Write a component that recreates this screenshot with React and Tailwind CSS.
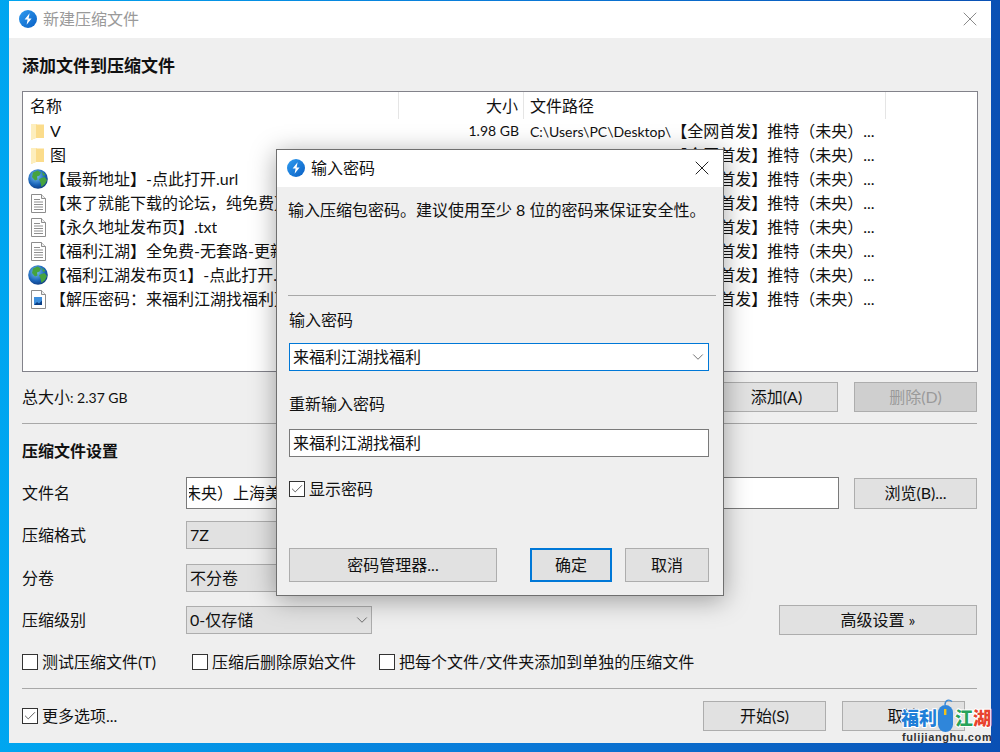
import { ChevronDown, Check, X } from "lucide-react";

const files = [
  { icon: "folder", name: "V", size: "1.98 GB" },
  { icon: "folder", name: "图", size: "" },
  { icon: "globe", name: "【最新地址】-点此打开.url", size: "" },
  { icon: "doc", name: "【来了就能下载的论坛，纯免费】.txt", size: "" },
  { icon: "doc", name: "【永久地址发布页】.txt", size: "" },
  { icon: "doc", name: "【福利江湖】全免费-无套路-更新快.txt", size: "" },
  { icon: "globe", name: "【福利江湖发布页1】-点此打开.url", size: "" },
  { icon: "image", name: "【解压密码：来福利江湖找福利】.png", size: "" },
];

function AppLogo() {
  return (
    <svg width="18" height="18" viewBox="0 0 18 18" className="shrink-0">
      <defs>
        <linearGradient id="logoFill" x1="0" y1="0" x2="1" y2="1">
          <stop offset="0" stopColor="#2f9cf0" />
          <stop offset="1" stopColor="#0a5fc4" />
        </linearGradient>
      </defs>
      <circle cx="9" cy="9" r="9" fill="url(#logoFill)" />
      <path d="M10.6 3.2 5.6 9.6h3l-1 5.2 5-6.4h-3z" fill="#fff" />
    </svg>
  );
}

function FileIcon({ type }) {
  if (type === "folder") {
    return (
      <svg width="13" height="17" viewBox="0 0 13 17" className="ml-[1px]">
        <path d="M0 1h5l1 .5h7V15H5l-5 2z" fill="#fbdc8b" />
        <path d="M0 1v16l5-2V1z" fill="#fdeebd" />
      </svg>
    );
  }
  if (type === "globe") {
    return (
      <svg width="20" height="20" viewBox="0 0 20 20" className="-ml-[2px]">
        <defs>
          <radialGradient id="globeFill" cx="0.4" cy="0.35" r="0.75">
            <stop offset="0" stopColor="#7cc4f4" />
            <stop offset="0.6" stopColor="#1a64b8" />
            <stop offset="1" stopColor="#0c2f70" />
          </radialGradient>
        </defs>
        <circle cx="10" cy="10" r="9.8" fill="url(#globeFill)" />
        <path d="M5 3.5 9.5 1.5l3.5 2-1.5 3-2.5 1 .5 3-2.5 1-3-3.5zM11 10l5.5-2 2.5 3-2 4-3.5 3-1-4.5zM14 2.5l3.5 3.5-2.5 1z" fill="#46a33e" />
      </svg>
    );
  }
  if (type === "image") {
    return (
      <svg width="15" height="19" viewBox="0 0 15 19" className="ml-[1px]">
        <path d="M.5.5h10l4 4v14H.5z" fill="#fff" stroke="#8d8d8d" />
        <path d="M10.5.5v4h4" fill="#eee" stroke="#8d8d8d" />
        <rect x="3" y="7" width="8" height="8" fill="#3f8fdc" />
        <path d="M3 15l3-3 2 1.5 3-3V15z" fill="#0c3f85" />
      </svg>
    );
  }
  return (
    <svg width="15" height="19" viewBox="0 0 15 19" className="ml-[1px]">
      <path d="M.5.5h10l4 4v14H.5z" fill="#fff" stroke="#8d8d8d" />
      <path d="M10.5.5v4h4" fill="#eee" stroke="#8d8d8d" />
      <path d="M3 5.5h6M3 8h9M3 10.5h9M3 13h9M3 15.5h9" stroke="#8f8f8f" />
    </svg>
  );
}

function Btn({ children, className = "", disabled = false, primary = false }) {
  const border = primary ? "border-2 border-[#0078d7]" : "border border-[#adadad]";
  const fill = disabled ? "text-[#9a9a9a] bg-[#cfcfcf]" : "bg-[#e1e1e1]";
  return (
    <div className={`flex items-center justify-center shrink-0 ${border} ${fill} ${className}`}>
      {children}
    </div>
  );
}

function CheckBox({ checked, children, className = "" }) {
  return (
    <div className={`flex items-center gap-[4px] ${className}`}>
      <div className="flex items-center justify-center w-[16px] h-[16px] border border-[#333] bg-white shrink-0">
        {checked && <Check size={14} strokeWidth={1.6} className="text-[#555]" />}
      </div>
      <span>{children}</span>
    </div>
  );
}

function Select({ value, className = "" }) {
  return (
    <div className={`flex items-center justify-between w-[186px] h-[28px] border border-[#adadad] bg-[#e1e1e1] pl-[3px] ${className}`}>
      <span>{value}</span>
      <ChevronDown size={18} strokeWidth={1} className="text-[#444]" />
    </div>
  );
}

function SettingRow({ label, children, className = "" }) {
  return (
    <div className={`flex items-center ${className}`}>
      <div className="w-[164px] shrink-0">{label}</div>
      {children}
    </div>
  );
}

function PasswordDialog() {
  return (
    <div className="absolute left-[276px] top-[149px] w-[448px] h-[447px] flex flex-col border border-[#6f6f6f] bg-[#efefef] shadow-[0_4px_24px_rgba(0,0,0,0.35)]">
      <div className="flex items-center h-[37px] shrink-0 bg-white pl-[10px] pr-[9px] pb-[1px]">
        <AppLogo />
        <span className="ml-[6px]">输入密码</span>
        <X size={24} strokeWidth={1} className="ml-auto text-[#222]" />
      </div>
      <div className="flex flex-col pl-[12px] pr-[14px]">
        <div className="h-[109px] pt-[11px] -ml-px border-b border-[#a8a8a8] -mr-[7px]">
          输入压缩包密码。建议使用至少 8 位的密码来保证安全性。
        </div>
        <div className="mt-[12px] h-[24px] leading-[24px]">输入密码</div>
        <div className="mt-[11px] flex items-center justify-between h-[28px] border border-[#0078d7] bg-white pl-[3px] pr-[1px] pb-[1px]">
          <span>来福利江湖找福利</span>
          <ChevronDown size={18} strokeWidth={1} className="text-[#444]" />
        </div>
        <div className="mt-[21px] h-[24px] leading-[24px]">重新输入密码</div>
        <div className="mt-[13px] flex items-center h-[28px] border border-[#7a7a7a] bg-white pl-[3px] pb-[1px]">
          来福利江湖找福利
        </div>
        <CheckBox checked className="mt-[20px] h-[24px]">显示密码</CheckBox>
        <div className="mt-[47px] flex">
          <Btn className="w-[208px] h-[34px]">密码管理器...</Btn>
          <Btn primary className="w-[82px] h-[34px] ml-[33px]">确定</Btn>
          <Btn className="w-[84px] h-[34px] ml-[13px]">取消</Btn>
        </div>
      </div>
    </div>
  );
}

function Watermark() {
  const outline = "[-webkit-text-stroke:2px_#fff] [paint-order:stroke_fill]";
  return (
    <div className="absolute left-[901px] top-[698px] w-[91px] h-[46px]">
      <div className="flex items-center h-[36px] pt-[4px]">
        <span className={`text-[18px] leading-none font-black text-[#1f7fd8] ${outline}`}>福利</span>
        <svg width="20" height="36" viewBox="0 0 20 36" className="shrink-0 -mx-[1px] -mt-[4px]">
          <path d="M9 7C9 2 13 1 16 3.5" stroke="#3a8ad8" strokeWidth="1.4" fill="none" />
          <rect x="2" y="7" width="15" height="27" rx="7.5" fill="#2f86da" />
          <rect x="8" y="11" width="2.4" height="6" fill="#f2c21a" />
        </svg>
        <span className={`text-[18px] leading-none font-black text-[#27a35a] ${outline}`}>江</span>
        <span className={`text-[18px] leading-none font-black text-[#e8432e] ${outline}`}>湖</span>
      </div>
      <div className="-mt-[3px] ml-[1px] h-[12px] whitespace-nowrap text-[11px] leading-[12px] font-bold tracking-[0.6px] text-[#333] font-['Liberation_Sans',sans-serif]">
        fulijianghu.com
      </div>
    </div>
  );
}

export default function App() {
  return (
    <div className="relative w-[1000px] h-[752px] overflow-hidden pl-[9px] pt-[1px] bg-[linear-gradient(90deg,#00a6f0_0%,#0a7ad8_50%,#0a50b4_100%)] text-[16px] leading-[24px] text-[#111] font-['Lato','Noto_Sans_CJK_SC',sans-serif]">
      <div className="flex flex-col w-[982px] h-[742px] bg-[#efefef]">
        <div className="flex items-center h-[37px] shrink-0 bg-white pl-[10px] pr-[9px] pb-[1px] text-[#9a9a9a]">
          <AppLogo />
          <span className="ml-[6px]">新建压缩文件</span>
          <X size={24} strokeWidth={1} className="ml-auto text-[#8a8a8a]" />
        </div>

        <div className="flex flex-col pl-[13px] pr-[14px]">
          <div className="mt-[16px] h-[24px] text-[17px] font-bold">添加文件到压缩文件</div>

          <div className="mt-[13px] -mr-px h-[281px] border border-[#82828a] bg-white">
            <div className="flex h-[27px] items-center">
              <div className="w-[376px] h-full pl-[7px] flex items-center border-r border-[#e5e5e5]">名称</div>
              <div className="w-[125px] h-full pr-[5px] flex items-center justify-end border-r border-[#e5e5e5]">大小</div>
              <div className="w-[362px] h-full pl-[6px] flex items-center border-r border-[#e5e5e5]">文件路径</div>
            </div>
            {files.map((file) => (
              <div key={file.name + file.icon} className="flex h-[24px] items-center">
                <div className="w-[376px] flex items-center pl-[7px]">
                  <div className="w-[20px] shrink-0 flex items-center">
                    <FileIcon type={file.icon} />
                  </div>
                  <span className="whitespace-nowrap overflow-hidden">{file.name}</span>
                </div>
                <div className="w-[125px] pr-[5px] text-right text-[14px]">{file.size}</div>
                <div className="pl-[6px] whitespace-nowrap">
                  <span className="text-[14px]">C:\Users\PC\Desktop\</span>【全网首发】推特（未央）...
                </div>
              </div>
            ))}
          </div>

          <div className="mt-[10px] flex items-center h-[30px]">
            <span>总大小<span className="text-[14px]">: 2.37 GB</span></span>
            <Btn className="ml-auto w-[123px] h-[30px]">添加(A)</Btn>
            <Btn disabled className="ml-[16px] w-[123px] h-[30px]">删除(D)</Btn>
          </div>

          <div className="mt-[11px] border-t border-[#a8a8a8]" />
          <div className="mt-[15px] h-[24px] text-[16px] font-bold">压缩文件设置</div>

          <SettingRow label="文件名" className="mt-[14px]">
            <div className="w-[653px] h-[32px] flex items-center border border-[#7a7a7a] bg-white pl-[2px] whitespace-nowrap">
              <div className="overflow-hidden w-full">
                <span className="block -ml-[4px]">未央）上海美</span>
              </div>
            </div>
            <Btn className="ml-[15px] w-[123px] h-[31px]">浏览(B)...</Btn>
          </SettingRow>

          <SettingRow label="压缩格式" className="mt-[12px]">
            <Select value="7Z" />
          </SettingRow>
          <SettingRow label="分卷" className="mt-[15px]">
            <Select value="不分卷" />
          </SettingRow>
          <SettingRow label="压缩级别" className="mt-[13px]">
            <Select value="0-仅存储" />
            <Btn className="ml-auto w-[198px] h-[30px]">高级设置 »</Btn>
          </SettingRow>

          <div className="mt-[15px] flex items-center h-[24px]">
            <CheckBox className="w-[170px]">测试压缩文件(T)</CheckBox>
            <CheckBox className="w-[187px]">压缩后删除原始文件</CheckBox>
            <CheckBox>把每个文件/文件夹添加到单独的压缩文件</CheckBox>
          </div>

          <div className="mt-[14px] border-t border-[#a8a8a8]" />

          <div className="mt-[12px] flex items-center h-[30px]">
            <CheckBox checked>更多选项...</CheckBox>
            <Btn className="ml-auto w-[123px] h-[30px]">开始(S)</Btn>
            <Btn className="ml-[16px] mr-[12px] w-[123px] h-[30px]">取消</Btn>
          </div>
        </div>
      </div>

      <PasswordDialog />
      <Watermark />
    </div>
  );
}
